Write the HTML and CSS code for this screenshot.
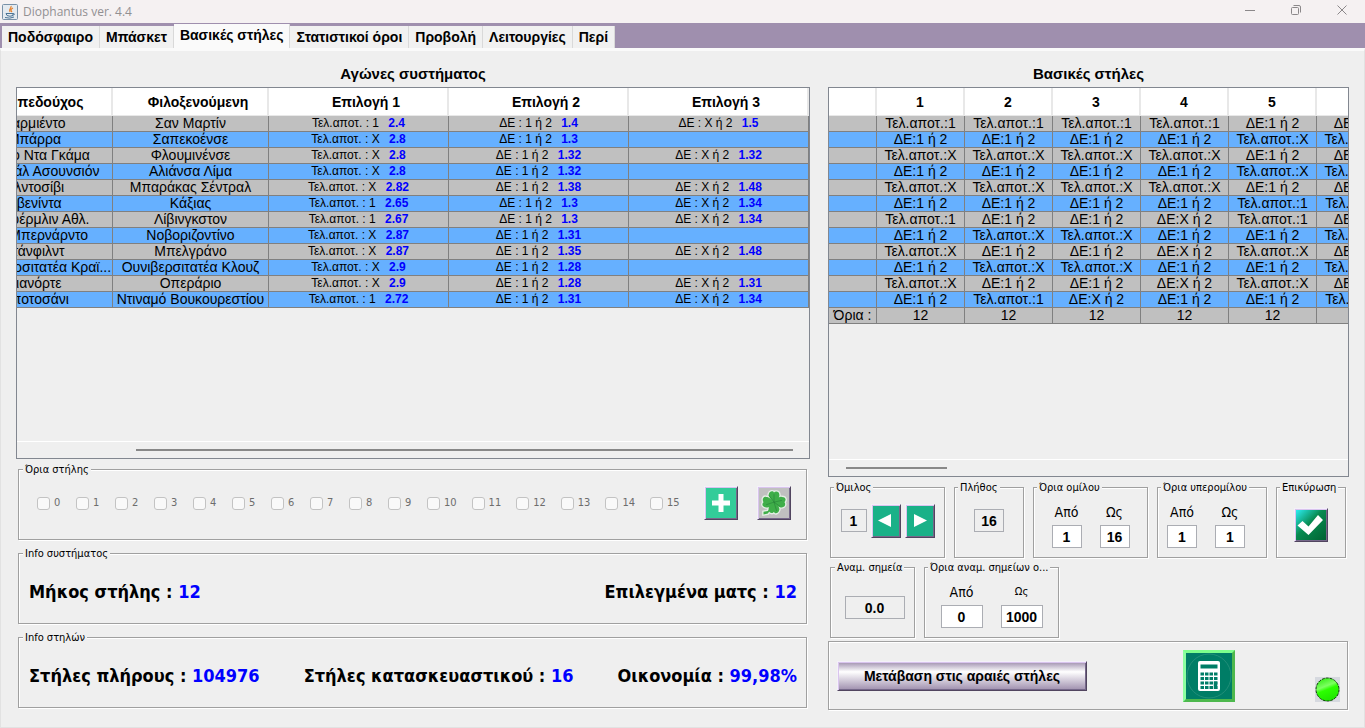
FILE: index.html
```
<!DOCTYPE html>
<html lang="el">
<head>
<meta charset="utf-8">
	<title>Diophantus ver. 4.4</title>
	<link rel="stylesheet" href="styles.css">
</head>
<body>
<header class="titlebar">
	<svg class="app-icon" width="16" height="16" viewBox="0 0 16 16">
		<rect x=".5" y=".5" width="15" height="15" rx="1" fill="#e4eaf0" stroke="#7891a8"/>
		<path d="M9 2c1 2-3 3-1 6M11 4c-2 1-3 2-1 4" fill="none" stroke="#e8812a" stroke-width="1.2"/>
		<path d="M4 9.5h7v2q-3 1.500-6 0zM11 9.500q3 0 0 2M3 13.500q5 1.500 9-.5" fill="none" stroke="#4b7496"/>
	</svg>
	<span class="app-name">Diophantus ver. 4.4</span>
	<div class="win-buttons">
		<button aria-label="Minimize"><svg width="12" height="12" viewBox="0 0 12 12"><path d="M1 6.500h10"/></svg></button>
		<button aria-label="Restore"><svg width="12" height="12" viewBox="0 0 12 12"><rect x="1.500" y="3.500" width="7" height="7" rx="1"/><path d="M3.500 1.500h5.500q1.500 0 1.500 1.500v5.500"/></svg></button>
		<button aria-label="Close"><svg width="12" height="12" viewBox="0 0 12 12"><path d="M1.500 1.500l9 9M10.500 1.500l-9 9"/></svg></button>
	</div>
</header>
<nav class="tabs">
	<button>Ποδόσφαιρο</button>
	<button>Μπάσκετ</button>
	<button class="on">Βασικές στήλες</button>
	<button>Στατιστικοί όροι</button>
	<button>Προβολή</button>
	<button>Λειτουργίες</button>
	<button>Περί</button>
</nav>
<main class="content">
	<section class="column">
		<h2>Αγώνες συστήματος</h2>
		<div class="scroll-box">
			<div class="viewport">
				<table class="grid games">
					<colgroup><col class="team"><col class="team"><col class="pick"><col class="pick"><col class="pick"></colgroup>
					<thead><tr><th>Γηπεδούχος</th><th>Φιλοξενούμενη</th><th>Επιλογή 1</th><th>Επιλογή 2</th><th>Επιλογή 3</th></tr></thead>
					<tbody>
						<tr><td>Σαρμιέντο</td><td>Σαν Μαρτίν</td><td>Τελ.αποτ. : 1 <b>2.4</b></td><td>ΔΕ : 1 ή 2 <b>1.4</b></td><td>ΔΕ : X ή 2 <b>1.5</b></td></tr>
						<tr><td>Μπάρρα</td><td>Σαπεκοένσε</td><td>Τελ.αποτ. : X <b>2.8</b></td><td>ΔΕ : 1 ή 2 <b>1.3</b></td><td></td></tr>
						<tr><td>Βάσκο Ντα Γκάμα</td><td>Φλουμινένσε</td><td>Τελ.αποτ. : X <b>2.8</b></td><td>ΔΕ : 1 ή 2 <b>1.32</b></td><td>ΔΕ : X ή 2 <b>1.32</b></td></tr>
						<tr><td>Νασιονάλ Ασουνσιόν</td><td>Αλιάνσα Λίμα</td><td>Τελ.αποτ. : X <b>2.8</b></td><td>ΔΕ : 1 ή 2 <b>1.32</b></td><td></td></tr>
						<tr><td>Αλντοσίβι</td><td>Μπαράκας Σέντραλ</td><td>Τελ.αποτ. : X <b>2.82</b></td><td>ΔΕ : 1 ή 2 <b>1.38</b></td><td>ΔΕ : X ή 2 <b>1.48</b></td></tr>
						<tr><td>Αβενίντα</td><td>Κάξιας</td><td>Τελ.αποτ. : 1 <b>2.65</b></td><td>ΔΕ : 1 ή 2 <b>1.3</b></td><td>ΔΕ : X ή 2 <b>1.34</b></td></tr>
						<tr><td>Ντανφέρμλιν Αθλ.</td><td>Λίβινγκστον</td><td>Τελ.αποτ. : 1 <b>2.67</b></td><td>ΔΕ : 1 ή 2 <b>1.3</b></td><td>ΔΕ : X ή 2 <b>1.34</b></td></tr>
						<tr><td>Σάο Μπερνάρντο</td><td>Νοβοριζοντίνο</td><td>Τελ.αποτ. : X <b>2.87</b></td><td>ΔΕ : 1 ή 2 <b>1.31</b></td><td></td></tr>
						<tr><td>Στάνφιλντ</td><td>Μπελγράνο</td><td>Τελ.αποτ. : X <b>2.87</b></td><td>ΔΕ : 1 ή 2 <b>1.35</b></td><td>ΔΕ : X ή 2 <b>1.48</b></td></tr>
						<tr><td>Κ Ουνιβερσιτατέα Κραϊ...</td><td>Ουνιβερσιτατέα Κλουζ</td><td>Τελ.αποτ. : X <b>2.9</b></td><td>ΔΕ : 1 ή 2 <b>1.28</b></td><td></td></tr>
						<tr><td>Σιανόρτε</td><td>Οπεράριο</td><td>Τελ.αποτ. : X <b>2.9</b></td><td>ΔΕ : 1 ή 2 <b>1.28</b></td><td>ΔΕ : X ή 2 <b>1.31</b></td></tr>
						<tr><td>Μποτοσάνι</td><td>Ντιναμό Βουκουρεστίου</td><td>Τελ.αποτ. : 1 <b>2.72</b></td><td>ΔΕ : 1 ή 2 <b>1.31</b></td><td>ΔΕ : X ή 2 <b>1.34</b></td></tr>
					</tbody>
				</table>
			</div>
			<div class="scrollbar"><div class="thumb" style="margin-left: 15%; width: 83%"></div></div>
		</div>
		<div class="panels">
			<fieldset class="limits">
				<legend>Όρια στήλης</legend>
				<div class="checks">
					<label><input type="checkbox" disabled>0</label>
					<label><input type="checkbox" disabled>1</label>
					<label><input type="checkbox" disabled>2</label>
					<label><input type="checkbox" disabled>3</label>
					<label><input type="checkbox" disabled>4</label>
					<label><input type="checkbox" disabled>5</label>
					<label><input type="checkbox" disabled>6</label>
					<label><input type="checkbox" disabled>7</label>
					<label><input type="checkbox" disabled>8</label>
					<label><input type="checkbox" disabled>9</label>
					<label><input type="checkbox" disabled>10</label>
					<label><input type="checkbox" disabled>11</label>
					<label><input type="checkbox" disabled>12</label>
					<label><input type="checkbox" disabled>13</label>
					<label><input type="checkbox" disabled>14</label>
					<label><input type="checkbox" disabled>15</label>
				</div>
				<div class="limit-buttons">
					<button class="bevel add" aria-label="Προσθήκη"><svg width="32" height="32" viewBox="0 0 32 32"><path d="M16 7v18M7 16h18" stroke="#fff" stroke-width="5"/></svg></button>
					<button class="bevel lucky" aria-label="Τυχαία"><svg width="32" height="32" viewBox="0 0 32 32">
						<g stroke="#e4efe4" stroke-width="3" fill="#e4efe4"><path id="clover" d="M16 15c-3-3-7-6-6-9 1-4 5-4 6-2 2-2 6-1 6 2 1 4-3 6-6 9zM16 15c3-4 6-7 9-6 5 0 5 4 3 6 2 3 0 6-3 6-4 0-6-3-9-6zM16 15c4 3 7 6 6 9-1 4-5 5-6 2-2 3-6 1-6-2-1-4 3-6 6-9zM16 15c-3 4-6 7-9 6-5-1-5-4-3-6-2-3 0-7 3-6 4 0 6 3 9 6z"/><path d="M14 17l-5 8-5 1v3l5-1 6-9z"/></g>
						<g fill="#3fae49"><use href="#clover"/><path d="M14 17l-5 8-5 1v3l5-1 6-9z"/></g>
						<path d="M16 15V6M16 15l9-2M16 15l3 10M16 15l-9 3M16 15l-6-8M16 15l7 5" stroke="#237b35" stroke-width=".6"/>
					</svg></button>
				</div>
			</fieldset>
			<fieldset class="info">
				<legend>Info συστήματος</legend>
				<p>Μήκος στήλης : <b>12</b></p>
				<p>Επιλεγμένα ματς : <b>12</b></p>
			</fieldset>
			<fieldset class="info">
				<legend>Info στηλών</legend>
				<p>Στήλες πλήρους : <b>104976</b></p>
				<p>Στήλες κατασκευαστικού : <b>16</b></p>
				<p>Οικονομία : <b>99,98%</b></p>
			</fieldset>
		</div>
	</section>
	<section class="column">
		<h2>Βασικές στήλες</h2>
		<div class="scroll-box">
			<div class="viewport">
				<table class="grid basic">
					<colgroup><col class="head"><col><col><col><col><col><col></colgroup>
					<thead><tr><th></th><th>1</th><th>2</th><th>3</th><th>4</th><th>5</th><th>6</th></tr></thead>
					<tbody>
						<tr><td></td><td>Τελ.αποτ.:1</td><td>Τελ.αποτ.:1</td><td>Τελ.αποτ.:1</td><td>Τελ.αποτ.:1</td><td>ΔΕ:1 ή 2</td><td>ΔΕ:1 ή 2</td></tr>
						<tr><td></td><td>ΔΕ:1 ή 2</td><td>ΔΕ:1 ή 2</td><td>ΔΕ:1 ή 2</td><td>ΔΕ:1 ή 2</td><td>Τελ.αποτ.:X</td><td>Τελ.αποτ.:X</td></tr>
						<tr><td></td><td>Τελ.αποτ.:X</td><td>Τελ.αποτ.:X</td><td>Τελ.αποτ.:X</td><td>Τελ.αποτ.:X</td><td>ΔΕ:1 ή 2</td><td>ΔΕ:1 ή 2</td></tr>
						<tr><td></td><td>ΔΕ:1 ή 2</td><td>ΔΕ:1 ή 2</td><td>ΔΕ:1 ή 2</td><td>ΔΕ:1 ή 2</td><td>Τελ.αποτ.:X</td><td>Τελ.αποτ.:X</td></tr>
						<tr><td></td><td>Τελ.αποτ.:X</td><td>Τελ.αποτ.:X</td><td>Τελ.αποτ.:X</td><td>Τελ.αποτ.:X</td><td>ΔΕ:1 ή 2</td><td>ΔΕ:1 ή 2</td></tr>
						<tr><td></td><td>ΔΕ:1 ή 2</td><td>ΔΕ:1 ή 2</td><td>ΔΕ:1 ή 2</td><td>ΔΕ:1 ή 2</td><td>Τελ.αποτ.:1</td><td>Τελ.αποτ.:1</td></tr>
						<tr><td></td><td>Τελ.αποτ.:1</td><td>ΔΕ:1 ή 2</td><td>ΔΕ:1 ή 2</td><td>ΔΕ:X ή 2</td><td>Τελ.αποτ.:1</td><td>ΔΕ:1 ή 2</td></tr>
						<tr><td></td><td>ΔΕ:1 ή 2</td><td>Τελ.αποτ.:X</td><td>Τελ.αποτ.:X</td><td>ΔΕ:1 ή 2</td><td>ΔΕ:1 ή 2</td><td>Τελ.αποτ.:X</td></tr>
						<tr><td></td><td>Τελ.αποτ.:X</td><td>ΔΕ:1 ή 2</td><td>ΔΕ:1 ή 2</td><td>ΔΕ:X ή 2</td><td>Τελ.αποτ.:X</td><td>ΔΕ:1 ή 2</td></tr>
						<tr><td></td><td>ΔΕ:1 ή 2</td><td>Τελ.αποτ.:X</td><td>Τελ.αποτ.:X</td><td>ΔΕ:1 ή 2</td><td>ΔΕ:1 ή 2</td><td>Τελ.αποτ.:X</td></tr>
						<tr><td></td><td>Τελ.αποτ.:X</td><td>ΔΕ:1 ή 2</td><td>ΔΕ:1 ή 2</td><td>ΔΕ:X ή 2</td><td>Τελ.αποτ.:X</td><td>ΔΕ:1 ή 2</td></tr>
						<tr><td></td><td>ΔΕ:1 ή 2</td><td>Τελ.αποτ.:1</td><td>ΔΕ:X ή 2</td><td>ΔΕ:1 ή 2</td><td>ΔΕ:1 ή 2</td><td>Τελ.αποτ.:1</td></tr>
						<tr><td>Όρια :</td><td>12</td><td>12</td><td>12</td><td>12</td><td>12</td><td>12</td></tr>
					</tbody>
				</table>
			</div>
			<div class="scrollbar"><div class="thumb" style="margin-left: 17px; width: 101px"></div></div>
		</div>
		<div class="groups">
			<fieldset class="group wide center">
				<legend>Όμιλος</legend>
				<input class="small" type="text" value="1" readonly aria-label="Όμιλος">
				<button class="bevel arrow" aria-label="Προηγούμενος"><svg width="28" height="31" viewBox="0 0 28 31"><path d="M6 15.500L19 9v13z" fill="#fff"/></svg></button>
				<button class="bevel arrow" aria-label="Επόμενος"><svg width="28" height="31" viewBox="0 0 28 31"><path d="M21 15.500L8 9v13z" fill="#fff"/></svg></button>
			</fieldset>
			<fieldset class="group narrow center">
				<legend>Πλήθος</legend>
				<input type="text" value="16" readonly aria-label="Πλήθος">
			</fieldset>
			<fieldset class="group wide range">
				<legend>Όρια ομίλου</legend>
				<label>Από<input type="text" value="1"></label>
				<label>Ως<input type="text" value="16"></label>
			</fieldset>
			<fieldset class="group super range">
				<legend>Όρια υπερομίλου</legend>
				<label>Από<input type="text" value="1"></label>
				<label>Ως<input type="text" value="1"></label>
			</fieldset>
			<fieldset class="group narrow center confirm">
				<legend>Επικύρωση</legend>
				<button class="bevel check" aria-label="Επικύρωση"><svg width="32" height="32" viewBox="0 0 32 32"><path d="M2.500 16.500l5-4.500 6 5.500 9.500-11.500 5 5L13.500 26z" fill="#fff"/></svg></button>
			</fieldset>
		</div>
		<div class="groups">
			<fieldset class="group points center">
				<legend>Αναμ. σημεία</legend>
				<input class="full" type="text" value="0.0" readonly aria-label="Αναμ. σημεία">
			</fieldset>
			<fieldset class="group expected range">
				<legend>Όρια αναμ. σημείων ο...</legend>
				<label>Από<input type="text" value="0"></label>
				<label><span class="minor">Ως</span><input type="text" value="1000"></label>
			</fieldset>
		</div>
		<div class="actions">
			<button class="bevel sparse">Μετάβαση στις αραιές στήλες</button>
			<button class="calc" aria-label="Υπολογισμός"><svg width="46" height="46" viewBox="0 0 46 46">
				<circle cx="23" cy="23" r="22" fill="none" stroke="#2f9580" stroke-width=".7"/>
				<rect x="12" y="8" width="22" height="30" rx="2" fill="#fff"/>
				<path d="M14.500 13.500h17" stroke="#007d66" stroke-width="4"/>
				<path d="M14.500 21h17M14.500 25.500h17M14.500 30h17M14.500 34.500h17" stroke="#007d66" stroke-width="3" stroke-dasharray="3.500 1"/>
				<path d="M29.500 28.500v7.500" stroke="#007d66" stroke-width="3.500"/>
			</svg></button>
			<svg class="led" width="25" height="25" viewBox="0 0 25 25">
				<defs><linearGradient id="glow" x1="0" y1="0" x2=".4" y2="1"><stop offset="0" stop-color="#22e800"/><stop offset=".45" stop-color="#7dff62"/><stop offset=".6" stop-color="#2cff00"/><stop offset="1" stop-color="#20e800"/></linearGradient></defs>
				<rect width="25" height="25" fill="#d6d9df"/>
				<circle cx="12.500" cy="12.500" r="11.500" fill="url(#glow)" stroke="#123b10" stroke-dasharray="3 1"/>
			</svg>
		</div>
	</section>
</main>
</body>
</html>
```
FILE: styles.css
```
*{
	box-sizing: border-box;
	margin: 0;
	padding: 0;
}
body{
	display: flex;
	flex-direction: column;
	min-height: 100vh;
	background: #f0f0f0;
	color: #000;
	font: 11px/14px "DejaVu Sans Condensed", "DejaVu Sans", sans-serif;
}
button,input{
	font: inherit;
	color: inherit;
}
/* title bar */
.titlebar{
	display: flex;
	align-items: center;
	height: 23px;
	padding-left: 2px;
	background: #f5f1f2;
}
.app-name{
	flex: 1;
	margin-left: 5px;
	color: #929092;
	font: 12px/16px "Open Sans", sans-serif;
}
.win-buttons{
	display: flex;
}
.win-buttons button{
	width: 46px;
	height: 20px;
	border: 0;
	background: none;
}
.win-buttons svg{
	fill: none;
	stroke: #8b888a;
}
/* tabs */
.tabs{
	display: flex;
	align-items: flex-end;
	height: 25px;
	padding-left: 2px;
	background: #9f8fae;
}
.tabs button{
	height: 22px;
	padding: 0 6px;
	border: 0;
	border-right: 1px solid #d9d9d9;
	background: #f1f1f1;
	font: bold 14px/20px "Liberation Sans", Arial, sans-serif;
}
.tabs .on{
	height: 24px;
	padding-bottom: 3px;
	background: #fafafa;
}
/* main panel */
.content{
	flex: 1;
	display: grid;
	grid-template-columns: 794fr 521fr;
	gap: 18px;
	padding: 10px 15px 17px;
	border: 1px solid #e2e2e2;
	border-top: 3px solid #fafafa;
	background: #efefef;
}
.column{
	display: flex;
	flex-direction: column;
	min-width: 0;
}
h2{
	font: bold 15px/26px "Liberation Sans", Arial, sans-serif;
	text-align: center;
}
.scroll-box{
	flex: 1;
	display: flex;
	flex-direction: column;
	border: 1px solid #828790;
}
.viewport{
	flex: 1;
	overflow: hidden;
}
.scrollbar{
	height: 17px;
	padding-top: 7px;
	border-top: 1px solid #fff;
}
.thumb{
	height: 2px;
	background: #888;
}
/* tables */
.grid{
	table-layout: fixed;
	border-collapse: separate;
	border-spacing: 0;
	font: 14px/15px "Liberation Sans", Arial, sans-serif;
	text-align: center;
	white-space: nowrap;
}
.grid th{
	height: 28px;
	padding-top: 2px;
	border-right: 2px solid #e8e8e8;
	border-bottom: 1px solid #e8e8e8;
	background: #fff;
	font-weight: bold;
}
.grid td{
	height: 16px;
	overflow: hidden;
	border-right: 1px solid #808080;
	border-bottom: 1px solid #808080;
	background: #c0c0c0;
}
.grid tr:nth-child(even) td{
	background: #66b0ff;
}
.games{
	width: 852px;
	margin-left: -60px;
}
.games th{
	padding-left: 16px;
}
.games .team{
	width: 156px;
}
.games .pick{
	width: 180px;
}
.games td:nth-child(n+3){
	font-size: 12px;
}
.games b{
	margin-left: 6px;
	color: #00f;
}
.basic{
	width: 576px;
}
.basic .head{
	width: 48px;
}
/* etched group boxes */
fieldset{
	min-width: 0;
	border: 1px solid #a0a0a0;
	box-shadow: 1px 1px 0 #fff, inset 1px 1px 0 #fff;
}
legend{
	height: 14px;
	margin-left: 3px;
	padding: 0 2px;
	background: #efefef;
	line-height: 16px;
	white-space: nowrap;
}
.panels{
	display: flex;
	flex-direction: column;
	gap: 6px;
	padding: 3px 3px 2px 2px;
}
.panels fieldset{
	display: flex;
	align-items: flex-start;
	justify-content: space-between;
	height: 78px;
	padding: 0 9px 0 10px;
}
.panels legend{
	margin-left: -6px;
}
.panels .info{
	padding-top: 25px;
	font-size: 18px;
	font-weight: bold;
}
.checks{
	display: flex;
	gap: 15px;
	padding: 20px 0 0 8px;
	color: #6d6d6d;
}
.checks label{
	display: flex;
	align-items: center;
	gap: 4px;
	min-width: 24px;
}
.checks input{
	appearance: none;
	width: 13px;
	height: 13px;
	border: 1px solid #c3c3c3;
	border-radius: 3px;
	background: #f9f9f9;
}
.limit-buttons{
	display: flex;
	gap: 19px;
	padding: 10px 6px 0 0;
}
.info legend{
	font-size: 11px;
	font-weight: normal;
}
.info b{
	color: #00f;
}
/* raised buttons */
.bevel{
	display: flex;
	align-items: center;
	justify-content: center;
	border: 1px solid;
	border-color: #f4f0fa #51455f #51455f #f4f0fa;
	box-shadow: inset 1px 1px 0 #d9c4ee, inset -1px -1px 0 #76688a;
}
.add,.lucky,.check{
	width: 34px;
	height: 34px;
}
.add{
	background: #33cc99;
}
.lucky{
	background: #c0c0c0;
}
.lucky svg{
	width: 28px;
	height: 28px;
}
.check{
	background: linear-gradient(135deg, #2ff5ff, #078a50 45%, #006030);
}
.arrow{
	width: 30px;
	height: 34px;
	background: #1ab188;
}
/* group settings */
.groups{
	display: flex;
	gap: 9px;
	padding: 3px 2px 0;
}
.groups + .groups{
	padding-top: 2px;
}
.group{
	display: flex;
	height: 78px;
}
.wide{
	width: 115px;
}
.narrow{
	width: 70px;
}
.super{
	width: 110px;
}
.points{
	width: 85px;
}
.expected{
	width: 135px;
}
.center{
	align-items: center;
	justify-content: center;
	gap: 4px;
	padding-bottom: 10px;
}
.confirm{
	padding-bottom: 2px;
}
.group input{
	width: 30px;
	height: 23px;
	border: 1px solid #abadb3;
	background: #fff;
	font: bold 14px/20px "Liberation Sans", Arial, sans-serif;
	text-align: center;
}
.group input[readonly]{
	background: #efefef;
}
.group .small{
	width: 26px;
}
.points input.full{
	width: 60px;
}
.points.center{
	padding: 4px 0 0 4px;
}
.points legend{
	margin-left: 0;
}
.range{
	justify-content: center;
	gap: 18px;
	padding-top: 9px;
}
.super{
	padding-right: 12px;
}
.range label{
	display: flex;
	flex-direction: column;
	align-items: center;
	gap: 4px;
	font-size: 14px;
	line-height: 18px;
}
.expected input{
	width: 42px;
}
.minor{
	font-size: 11px;
}
.actions{
	display: flex;
	align-items: center;
	justify-content: space-between;
	height: 69px;
	margin: 3px 1px 0 0;
	padding: 0 7px 0 8px;
	border: 1px solid #a0a0a0;
	box-shadow: 1px 1px 0 #fff, inset 1px 1px 0 #fff;
}
.sparse{
	width: 250px;
	height: 30px;
	background: linear-gradient(#9f8fae, #fff 35%, #9f8fae);
	font: bold 14px/20px "Liberation Sans", Arial, sans-serif;
}
.calc{
	width: 52px;
	height: 52px;
	margin-left: 16px;
	border: 3px solid;
	border-color: #7dff8c #4db84d #4db84d #8cffa0;
	background: #007d66;
}
.calc svg{
	display: block;
}
.led{
	align-self: flex-end;
	margin-bottom: 7px;
}
```
